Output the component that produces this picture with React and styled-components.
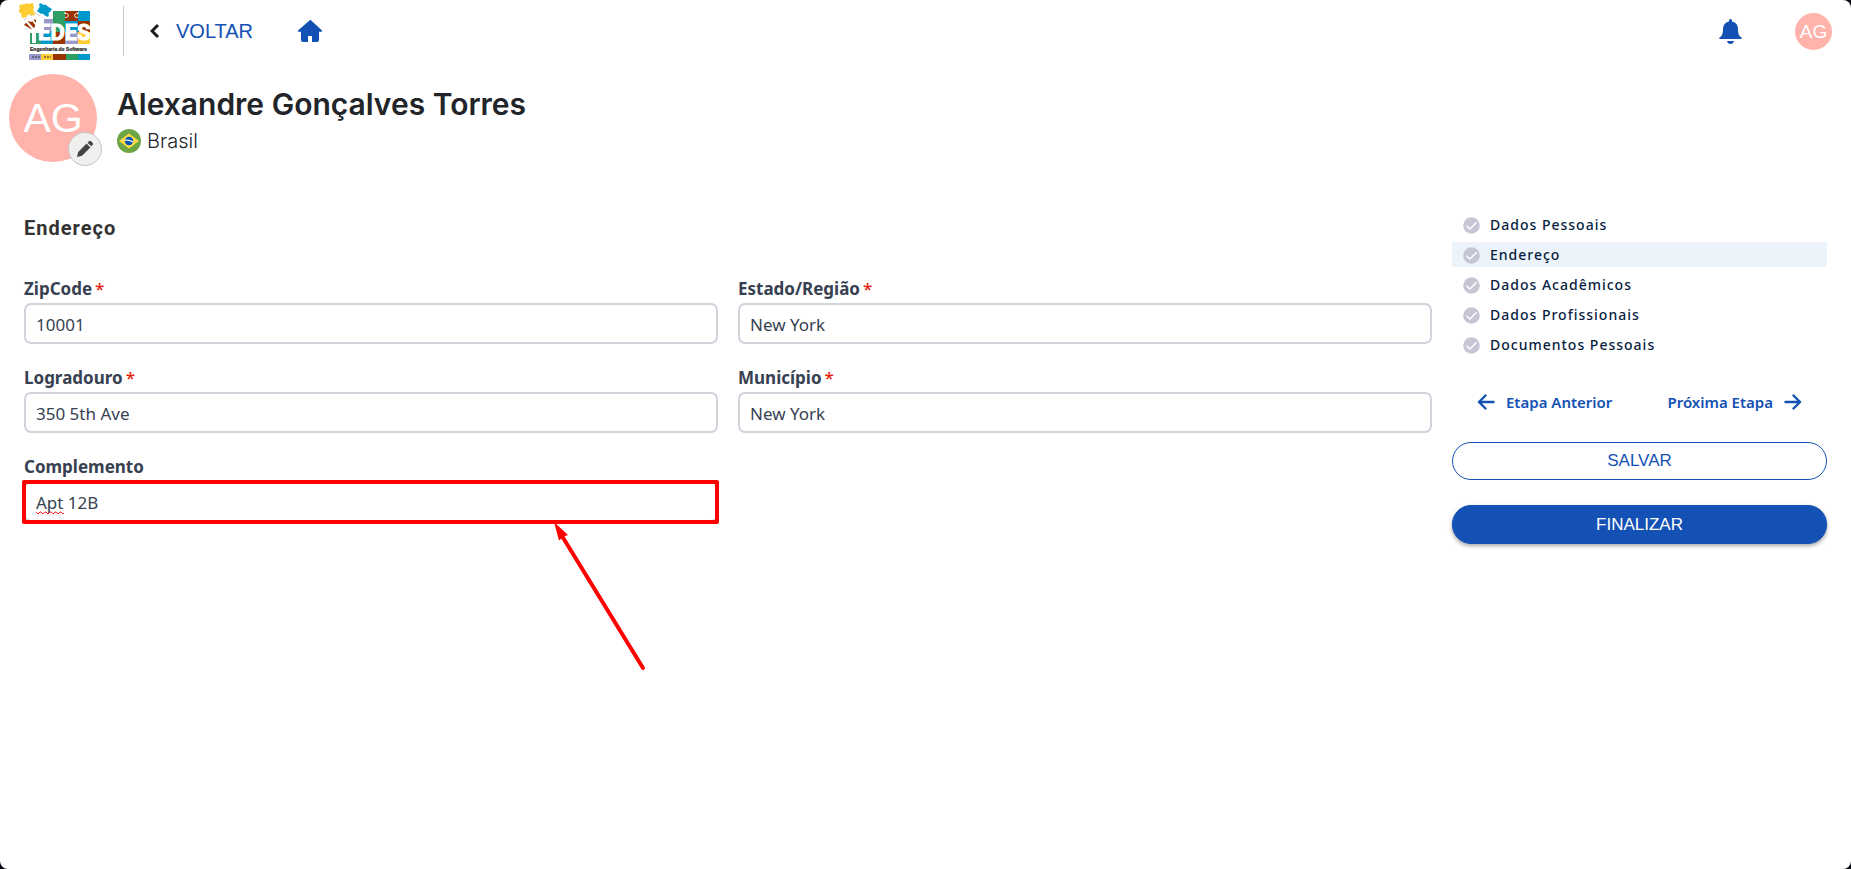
import React from "react";
import styled, { createGlobalStyle, css } from "styled-components";

const sans = `"Liberation Sans", Arial, sans-serif`;
const noto = `"Noto Sans", "Segoe UI", sans-serif`;
const inter = `Inter, "Liberation Sans", sans-serif`;

const colors = {
  primary: "#1351b4",
  navy: "#071d41",
  slate: "#374151",
  border: "#d1d5db",
  salmon: "#ffb3ab",
  mark: "#ff0000",
};

const GlobalStyle = createGlobalStyle`
  *, *::before, *::after { box-sizing: border-box; }
  body { margin: 0; background: #05070f; }
  button, input { font: inherit; margin: 0; }
`;

const Page = styled.div`
  min-height: 100vh;
  background: #fff;
  border-radius: 8px;
  overflow: hidden;
  font-family: ${noto};
`;

const Header = styled.header`
  display: flex;
  align-items: center;
  height: 62px;
  padding: 0 19px;
`;

const Divider = styled.span`
  width: 1px;
  height: 50px;
  margin-left: 32px;
  background: #ccc;
`;

const BackLink = styled.a`
  display: flex;
  align-items: center;
  gap: 16px;
  margin: 0 44px 0 26px;
  font: 400 20px/24px ${sans};
  color: ${colors.primary};
  text-decoration: none;
`;

const IconButton = styled.button`
  display: flex;
  padding: 0;
  border: 0;
  background: none;
  color: ${colors.primary};
  cursor: pointer;
`;

const HeaderEnd = styled.div`
  display: flex;
  align-items: center;
  gap: 53px;
  margin-left: auto;
`;

const Avatar = styled.span`
  display: flex;
  align-items: center;
  justify-content: center;
  width: ${(p) => p.$size}px;
  height: ${(p) => p.$size}px;
  border-radius: 50%;
  background: ${colors.salmon};
  color: #fff;
  font: 400 ${(p) => p.$text}px/1 ${sans};
`;

const Profile = styled.section`
  display: flex;
  gap: 20px;
  padding: 12px 9px 0;
`;

const AvatarBox = styled.div`
  position: relative;
`;

const EditButton = styled.button`
  position: absolute;
  right: -5px;
  bottom: -4px;
  display: flex;
  align-items: center;
  justify-content: center;
  width: 34px;
  height: 34px;
  padding: 0;
  border: 1px solid #c4c2c2;
  border-radius: 50%;
  background: #f1eeee;
`;

const Person = styled.div`
  padding-top: 10px;
  font-family: ${inter};
  color: #212529;
`;

const Name = styled.h1`
  margin: 0;
  font-size: 30px;
  font-weight: 600;
  line-height: 40px;
`;

const Country = styled.p`
  display: flex;
  align-items: center;
  gap: 6px;
  margin: 5px 0 0;
  font-size: 20px;
  font-weight: 300;
  line-height: 24px;
`;

const Main = styled.main`
  display: flex;
  align-items: flex-start;
  gap: 20px;
  padding: 50px 24px 24px;
`;

const Form = styled.form`
  flex: 1;
  min-width: 0;
`;

const Title = styled.h2`
  margin: 4px 0 35px;
  font: 700 20px/24px Roboto, ${sans};
  letter-spacing: 1px;
  color: #333;
`;

const Fields = styled.div`
  display: grid;
  grid-template-columns: 1fr 1fr;
  gap: 20px;
`;

const Label = styled.label`
  display: block;
  padding: 2px 0;
  font-size: 17px;
  font-weight: 700;
  line-height: 24px;
  color: ${colors.slate};
`;

const Required = styled.span`
  margin-left: 3px;
  font-weight: 500;
  color: #e61e0a;
`;

const Control = styled.div`
  position: relative;
`;

const Input = styled.input`
  display: block;
  width: 100%;
  height: 41px;
  padding: 1px 10px 0;
  border: 2px solid ${colors.border};
  border-radius: 7px;
  background: #fff;
  font-size: 17px;
  line-height: 24px;
  color: ${colors.slate};
  outline: none;
`;

const Outline = styled.span`
  position: absolute;
  inset: -1px -1px -2px -2px;
  border: 4px solid ${colors.mark};
  border-radius: 2px;
  pointer-events: none;
`;

const Arrow = styled.svg`
  position: absolute;
  top: 100%;
  right: 72px;
  pointer-events: none;
`;

const Squiggle = styled.svg`
  position: absolute;
  left: 12px;
  bottom: 7px;
  pointer-events: none;
`;

const Aside = styled.aside`
  flex: 0 0 375px;
`;

const Steps = styled.ul`
  display: grid;
  gap: 5px;
  margin: 0;
  padding: 0;
  list-style: none;
`;

const Step = styled.li`
  padding: 1px 11px 0;
  background: ${(p) => (p.$active ? "#edf3fb" : "transparent")};
`;

const StepLink = styled.a`
  display: flex;
  align-items: center;
  gap: 10px;
  font-size: 14px;
  font-weight: 500;
  letter-spacing: 1px;
  line-height: 24px;
  color: ${colors.navy};
  text-decoration: none;
`;

const StepNav = styled.nav`
  display: flex;
  justify-content: space-between;
  padding: 33px 25px 28px;
`;

const NavButton = styled.button`
  display: flex;
  align-items: center;
  gap: 11px;
  padding: 0;
  border: 0;
  background: none;
  font-size: 15px;
  font-weight: 600;
  line-height: 24px;
  color: ${colors.primary};
  cursor: pointer;
`;

const Actions = styled.div`
  display: grid;
  gap: 25px;
`;

const ActionButton = styled.button`
  height: 38px;
  border: 1px solid ${colors.primary};
  border-radius: 19px;
  background: #fff;
  color: ${colors.primary};
  font: 400 17px/24px ${sans};
  cursor: pointer;
  ${(p) =>
    p.$filled &&
    css`
      height: 39px;
      background: ${colors.primary};
      color: #fff;
      box-shadow: 0 2px 4px rgba(0, 0, 0, 0.35);
    `}
`;

const palette = {
  green: "#2f9e63",
  rust: "#993300",
  blue: "#0099cc",
  lilac: "#9999cc",
  yellow: "#ffcc33",
};

const tiles = [
  [53, 11, 12, 10, "green"], [65, 11, 13, 10, "rust"], [78, 11, 12, 10, "blue"],
  [44, 19, 9, 13, "lilac"], [53, 21, 12, 11, "green"], [65, 21, 13, 11, "blue"], [78, 21, 12, 11, "rust"],
  [30, 33, 11, 11, "green"], [41, 31, 12, 13, "blue"], [53, 32, 12, 12, "rust"],
  [65, 32, 13, 12, "lilac"], [78, 32, 12, 12, "yellow"],
  [29, 54, 12, 6, "lilac"], [41, 54, 12, 6, "yellow"], [53, 54, 13, 6, "rust"],
  [66, 54, 12, 6, "green"], [78, 54, 12, 6, "blue"],
];

function Logo() {
  return (
    <svg width="72" height="60" viewBox="19 1 72 60" role="img" aria-label="SEDES Engenharia de Software">
      {tiles.map(([x, y, w, h, c]) => (
        <rect key={`${x}-${y}`} x={x} y={y} width={w} height={h} fill={palette[c]} />
      ))}
      <path d="M65 12v2a2 2 0 1 1 0 3M78 12v2a2 2 0 1 0 0 3" fill="none" stroke="#fff" strokeWidth="1" />
      <path d="M19 5l6-1a2 2 0 0 1 3 0l5-1 1 5a2 2 0 0 0 0 3l1 4-4 1a2 2 0 0 0-4 1l-5 1-1-5a2 2 0 0 1-1-4z" fill={palette.yellow} />
      <path d="M40 3l4 2a2 2 0 0 1 3 1l5 3-2 3a2 2 0 0 0-1 3l-1 2-4-2a2 2 0 0 0-3-1l-4-3 2-3a2 2 0 0 0 0-3z" fill={palette.blue} />
      <path d="M24 25l4-4 3 1 4-3 3 5-3 4 2 4-6-3z" fill={palette.rust} />
      <path d="M26 21l9 10M31 18l6 8M36 14l4 7" stroke="#fff" strokeWidth="2" />
      <path d="M24 20l3-2M30 16l3-2M35 13l5 3" stroke="#ccc" strokeWidth="1" fill="none" />
      <path d="M34 29v14M38 21c0 5-2 8-4 12" stroke="#fff" strokeWidth="4" fill="none" />
      <g fontWeight="700">
        <text x="38" y="40" fontSize="22" fill="#fff" stroke="#fff" strokeWidth="1" fontFamily="Roboto, sans-serif">EDES</text>
        <text x="30" y="51" fontSize="5" fill="#222" stroke="#222" strokeWidth=".2" fontFamily="Liberation Sans, sans-serif">Engenharia de Software</text>
      </g>
      <path d="M32 57h8M44 57h7" stroke="#333" strokeWidth="1" strokeDasharray="2 1" />
    </svg>
  );
}

const Chevron = () => (
  <svg width="10" height="16" viewBox="0 0 10 16" fill="none" stroke="#1b1b1b" strokeWidth="3" aria-hidden="true">
    <path d="M8 2L2 8l6 6" />
  </svg>
);

const Home = () => (
  <svg width="26" height="24" viewBox="0 0 26 24" fill="currentColor" aria-hidden="true">
    <path d="M13 1L1 11.500q-.8.900.4 1.200H4V21q0 2 2 2h5v-6h4v6h5q2 0 2-2v-8.300h2.700q1-.3.300-1.200L14 1.300Q13.500.800 13 1z" />
  </svg>
);

const Bell = () => (
  <svg width="23" height="25" viewBox="0 0 23 25" fill="currentColor" aria-hidden="true">
    <path d="M10 2.500V1.500a1.500 1.500 0 0 1 3 0v1C17 3.300 19 6.500 19 10c0 5 1 7 3.500 8.500.5.400.5 1.500-.5 1.500H1c-1 0-1-1.100-.5-1.500C3 17 4 15 4 10c0-3.500 2-6.700 6-7.500zM8 22h7c-.4 1.900-1.700 3-3.500 3S8.400 23.900 8 22z" />
  </svg>
);

const Pencil = () => (
  <svg width="18" height="18" viewBox="0 0 18 18" fill="#444" aria-hidden="true">
    <path d="M1 17l1.200-5L10.600 3.600l3.800 3.800L6 15.800zM11.500 2.700l1.300-1.300q1-.9 2-.4l2 2q.7 1-.2 2l-1.300 1.300z" />
  </svg>
);

const Flag = () => (
  <svg width="24" height="24" viewBox="0 0 24 24" aria-hidden="true">
    <circle cx="12" cy="12" r="12" fill="#6da544" />
    <path d="M12 4.500L22 12l-10 7.500L2 12z" fill="#ffda44" />
    <circle cx="12" cy="12" r="4.200" fill="#0052b4" />
    <path d="M8 11.300q4.500-1 8 2" fill="none" stroke="#f0f0f0" strokeWidth="1.200" />
  </svg>
);

const Check = () => (
  <svg width="17" height="17" viewBox="0 0 17 17" fill="none" aria-hidden="true">
    <circle cx="8.500" cy="8.500" r="8.300" fill="#c5c5d3" />
    <path d="M3.500 8.700l3.400 3.300 6.800-6.800" stroke="#fff" strokeWidth="1.500" />
  </svg>
);

const StepArrow = ({ next }) => (
  <svg width="18" height="16" viewBox="0 0 18 16" fill="none" stroke="currentColor" strokeWidth="2.400" strokeLinecap="round" strokeLinejoin="round" aria-hidden="true">
    <path d={next ? "M1.500 8H16M9.500 1.500L16 8l-6.500 6.500" : "M16.500 8H2M8.500 1.500L2 8l6.500 6.500"} />
  </svg>
);

function Field({ id, label, value, required, highlighted }) {
  return (
    <div>
      <Label htmlFor={id}>
        {label}
        {required && <Required>*</Required>}
      </Label>
      <Control>
        <Input id={id} type="text" defaultValue={value} required={required} spellCheck={false} />
        {highlighted && (
          <>
            <Squiggle width="28" height="4" viewBox="0 0 28 4" fill="none" stroke="#f22" aria-hidden="true">
              <path d="M0 1l2 2 2-2h1l2 2 2-2h1l2 2 2-2h1l2 2 2-2h1l2 2 2-2h1l2 2 1-1" />
            </Squiggle>
            <Outline />
            <Arrow width="94" height="150" viewBox="0 0 94 150" aria-hidden="true">
              <path d="M10 14L91 146" stroke={colors.mark} strokeWidth="4" strokeLinecap="round" />
              <path d="M2 0L16 13l-4 1.500-5 4z" fill={colors.mark} />
            </Arrow>
          </>
        )}
      </Control>
    </div>
  );
}

const fields = [
  { id: "zip", label: "ZipCode", value: "10001", required: true },
  { id: "state", label: "Estado/Região", value: "New York", required: true },
  { id: "street", label: "Logradouro", value: "350 5th Ave", required: true },
  { id: "city", label: "Município", value: "New York", required: true },
  { id: "extra", label: "Complemento", value: "Apt 12B", highlighted: true },
];

const steps = ["Dados Pessoais", "Endereço", "Dados Acadêmicos", "Dados Profissionais", "Documentos Pessoais"];

export default function App() {
  return (
    <>
      <GlobalStyle />
      <Page>
        <Header>
          <Logo />
          <Divider />
          <BackLink href="#voltar"><Chevron />VOLTAR</BackLink>
          <IconButton type="button" aria-label="Início"><Home /></IconButton>
          <HeaderEnd>
            <IconButton type="button" aria-label="Notificações"><Bell /></IconButton>
            <Avatar $size={37} $text={19}>AG</Avatar>
          </HeaderEnd>
        </Header>
        <Profile>
          <AvatarBox>
            <Avatar $size={88} $text={41}>AG</Avatar>
            <EditButton type="button" aria-label="Editar foto"><Pencil /></EditButton>
          </AvatarBox>
          <Person>
            <Name>Alexandre Gonçalves Torres</Name>
            <Country><Flag />Brasil</Country>
          </Person>
        </Profile>
        <Main>
          <Form>
            <Title>Endereço</Title>
            <Fields>
              {fields.map((f) => <Field key={f.id} {...f} />)}
            </Fields>
          </Form>
          <Aside>
            <Steps>
              {steps.map((s) => (
                <Step key={s} $active={s === "Endereço"}>
                  <StepLink href="#etapa"><Check />{s}</StepLink>
                </Step>
              ))}
            </Steps>
            <StepNav>
              <NavButton type="button"><StepArrow />Etapa Anterior</NavButton>
              <NavButton type="button">Próxima Etapa<StepArrow next /></NavButton>
            </StepNav>
            <Actions>
              <ActionButton type="button">SALVAR</ActionButton>
              <ActionButton type="button" $filled>FINALIZAR</ActionButton>
            </Actions>
          </Aside>
        </Main>
      </Page>
    </>
  );
}
